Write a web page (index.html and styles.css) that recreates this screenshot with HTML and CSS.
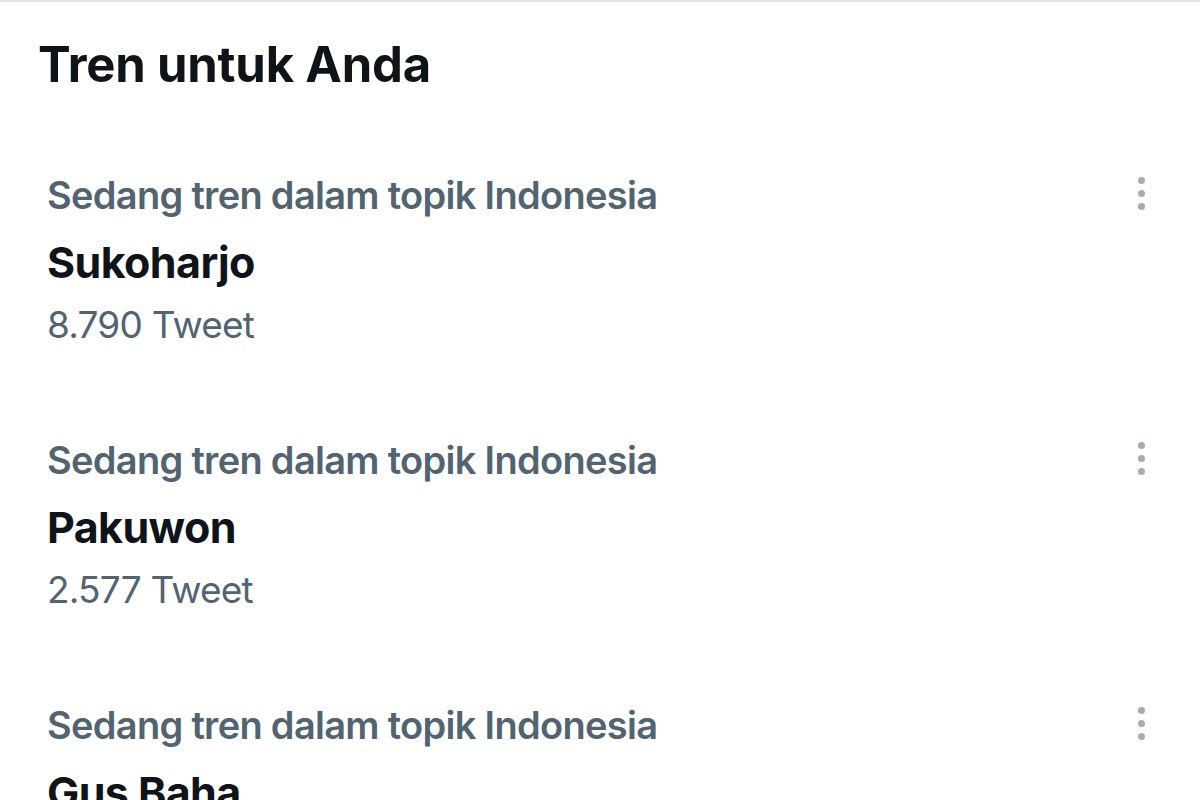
FILE: index.html
```html
<!DOCTYPE html>
<html lang="id">
<head>
  <meta charset="UTF-8" />
  <meta name="viewport" content="width=device-width, initial-scale=1" />
  <title>Tren untuk Anda</title>
  <link rel="stylesheet" href="styles.css">
</head>
<body>
  <div class="panel">
    <h1 class="title">Tren untuk Anda</h1>

    <div class="trend">
      <div class="trend-body">
        <div class="context">Sedang tren dalam topik Indonesia</div>
        <div class="name">Sukoharjo</div>
        <div class="count">8.790 Tweet</div>
      </div>
      <div class="more"><span></span><span></span><span></span></div>
    </div>

    <div class="trend">
      <div class="trend-body">
        <div class="context">Sedang tren dalam topik Indonesia</div>
        <div class="name">Pakuwon</div>
        <div class="count">2.577 Tweet</div>
      </div>
      <div class="more"><span></span><span></span><span></span></div>
    </div>

    <div class="trend">
      <div class="trend-body">
        <div class="context">Sedang tren dalam topik Indonesia</div>
        <div class="name">Gus Baha</div>
        <div class="count">1.204 Tweet</div>
      </div>
      <div class="more"><span></span><span></span><span></span></div>
    </div>
  </div>
</body>
</html>
```

FILE: styles.css
```css
body {
  margin: 0;
  background: #fff;
  font-family: Inter, Roboto, "Liberation Sans", sans-serif;
  color: #0f1419;
  overflow: hidden;
}
.panel {
  border-top: 2px solid #e1e3e5;
  height: 798px;
  overflow: hidden;
}
.title {
  margin: 0 0 76px;
  padding: 33px 0 0 38px;
  font-size: 49px;
  font-weight: 700;
  line-height: 60px;
  letter-spacing: -0.2px;
}
.trend {
  display: flex;
  justify-content: space-between;
  padding: 0 55px 0 47px;
  margin-bottom: 87px;
}
.context {
  font-size: 38px;
  font-weight: 600;
  color: #536471;
  line-height: 48px;
  letter-spacing: -0.7px;
}
.name {
  margin-top: 18px;
  font-size: 43px;
  font-weight: 700;
  line-height: 50px;
  letter-spacing: -0.6px;
}
.count {
  margin-top: 14px;
  font-size: 37px;
  color: #536471;
  line-height: 48px;
  letter-spacing: -0.8px;
}
.more {
  display: flex;
  flex-direction: column;
  gap: 6px;
  padding-top: 6px;
}
.more span {
  width: 7px;
  height: 7px;
  border-radius: 50%;
  background: #a3acb4;
}
```
